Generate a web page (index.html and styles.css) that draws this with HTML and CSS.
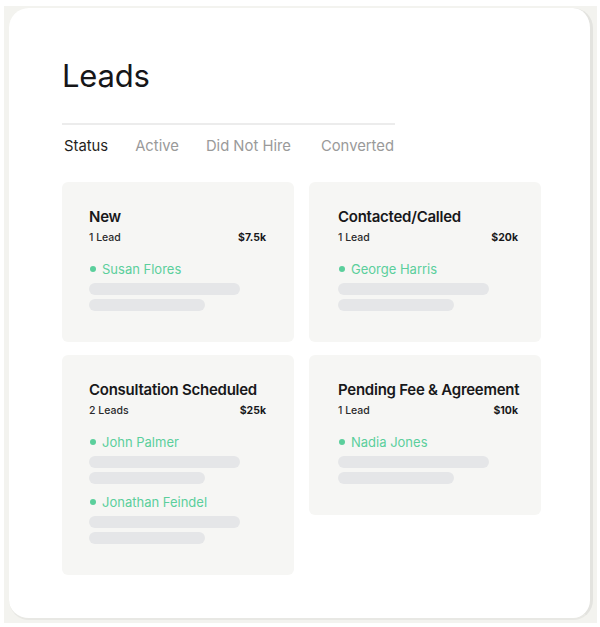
FILE: index.html
```html
<!DOCTYPE html>
<html>
<head>
<meta charset="utf-8">
<link rel="stylesheet" href="styles.css">
</head>
<body>
<div class="frame">
  <div class="panel">
    <h1 class="title">Leads</h1>
    <div class="divider"></div>
    <nav class="tabs">
      <span class="tab active">Status</span>
      <span class="tab">Active</span>
      <span class="tab">Did Not Hire</span>
      <span class="tab tab-last">Converted</span>
    </nav>
    <div class="grid">
      <section class="card">
        <h2 class="card-title">New</h2>
        <div class="meta"><span>1 Lead</span><span class="amount">$7.5k</span></div>
        <div class="lead">
          <div class="name"><span class="dot"></span>Susan Flores</div>
          <div class="bar bar-long"></div>
          <div class="bar bar-short"></div>
        </div>
      </section>
      <section class="card card-right">
        <h2 class="card-title">Contacted/Called</h2>
        <div class="meta"><span>1 Lead</span><span class="amount">$20k</span></div>
        <div class="lead">
          <div class="name"><span class="dot"></span>George Harris</div>
          <div class="bar bar-long"></div>
          <div class="bar bar-short"></div>
        </div>
      </section>
      <section class="card">
        <h2 class="card-title">Consultation Scheduled</h2>
        <div class="meta"><span>2 Leads</span><span class="amount">$25k</span></div>
        <div class="lead">
          <div class="name"><span class="dot"></span>John Palmer</div>
          <div class="bar bar-long"></div>
          <div class="bar bar-short"></div>
        </div>
        <div class="lead lead-next">
          <div class="name"><span class="dot"></span>Jonathan Feindel</div>
          <div class="bar bar-long"></div>
          <div class="bar bar-short"></div>
        </div>
      </section>
      <section class="card card-right">
        <h2 class="card-title">Pending Fee &amp; Agreement</h2>
        <div class="meta"><span>1 Lead</span><span class="amount">$10k</span></div>
        <div class="lead">
          <div class="name"><span class="dot"></span>Nadia Jones</div>
          <div class="bar bar-long"></div>
          <div class="bar bar-short"></div>
        </div>
      </section>
    </div>
  </div>
</div>
</body>
</html>
```

FILE: styles.css
```css
html, body {
  margin: 0;
  padding: 0;
  background: #ffffff;
}

body {
  font-family: "Inter", "Liberation Sans", sans-serif;
  color: #1c1c1e;
}

.frame {
  margin: 6px 3px 4px 4px;
  width: 593px;
  height: 617px;
  box-sizing: border-box;
  background: #f3f3ef;
  padding: 2px 4px 3px 5px;
}

.panel {
  box-sizing: border-box;
  height: 100%;
  background: #ffffff;
  border-radius: 20px;
  border-right: 3px solid #e3e3df;
  border-bottom: 2px solid #e8e8e4;
  padding: 49px 0 0 53px;
}

.title {
  margin: 0;
  font-size: 31px;
  line-height: 37px;
  font-weight: 400;
  letter-spacing: -0.2px;
  color: #161618;
}

.divider {
  margin-top: 29px;
  width: 333px;
  height: 2px;
  background: #ececec;
}

.tabs {
  margin-top: 12px;
  display: flex;
  gap: 27px;
  font-size: 14.8px;
  line-height: 18px;
  color: #9a9a9a;
  padding-left: 2px;
}

.tab.active {
  color: #1f1f21;
}

.tab-last {
  margin-left: 3px;
}

.grid {
  margin-top: 27px;
  display: grid;
  grid-template-columns: 232px 232px;
  column-gap: 15px;
  row-gap: 13px;
  align-items: start;
}

.card {
  background: #f6f6f4;
  border-radius: 6px;
  padding: 26px 28px 31px 27px;
}

.card-right {
  padding: 26px 23px 31px 29px;
}

.card-title {
  margin: 0;
  font-size: 15px;
  line-height: 18px;
  font-weight: 600;
  letter-spacing: -0.25px;
  white-space: nowrap;
  color: #18181a;
}

.meta {
  margin-top: 5px;
  display: flex;
  justify-content: space-between;
  font-size: 10.5px;
  line-height: 14px;
  font-weight: 500;
  color: #2a2a2c;
}

.amount {
  font-weight: 700;
  color: #18181a;
}

.lead {
  margin-top: 15px;
}

.lead-next {
  margin-top: 9px;
}

.name {
  display: flex;
  align-items: center;
  font-size: 13px;
  line-height: 18px;
  color: #5bcf9c;
}

.dot {
  width: 6px;
  height: 6px;
  border-radius: 50%;
  background: #5bcf9c;
  margin: 0 6px 0 1px;
}

.bar {
  height: 12px;
  border-radius: 6px;
  background: #e5e6e8;
}

.bar-long {
  margin-top: 5px;
  width: 151px;
}

.bar-short {
  margin-top: 4px;
  width: 116px;
}
```
